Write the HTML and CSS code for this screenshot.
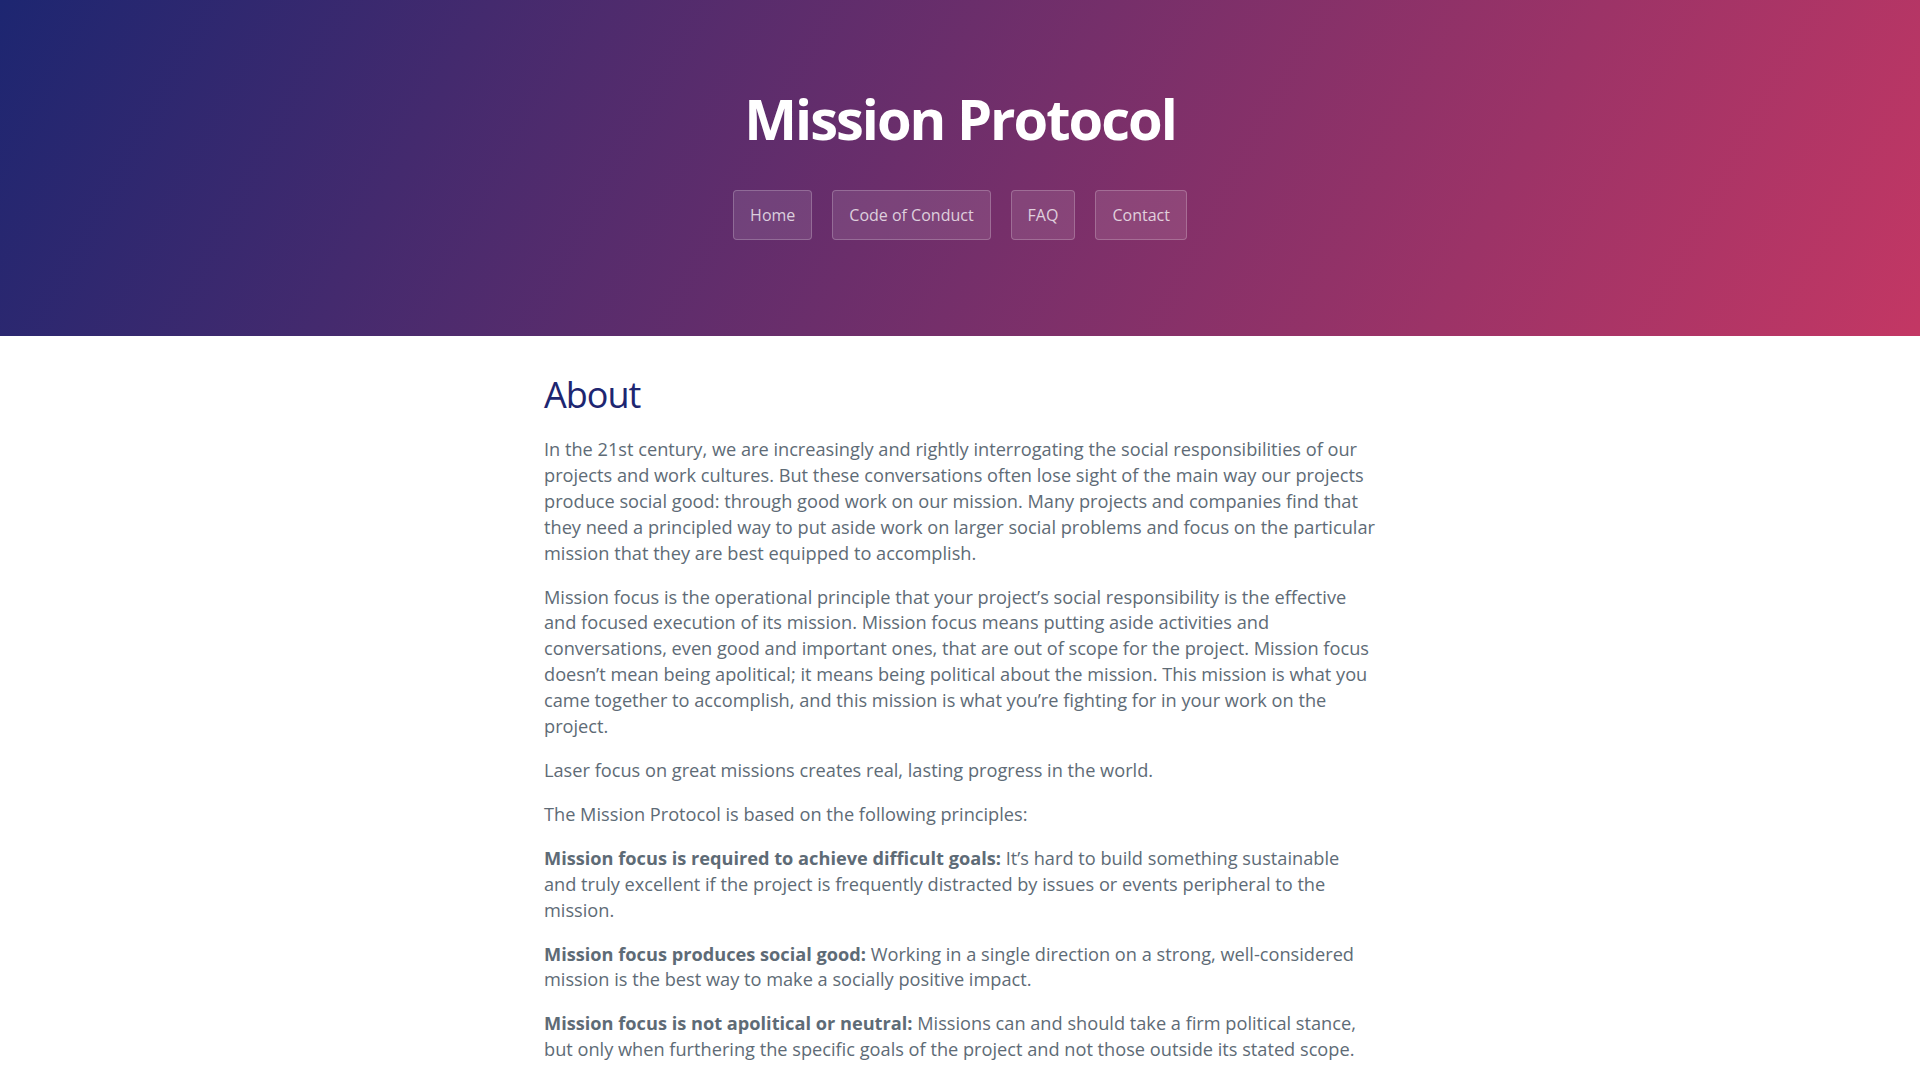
FILE: index.html
```html
<!DOCTYPE html>
<html lang="en">
<head>
<meta charset="utf-8">
<title>Mission Protocol</title>
<link rel="stylesheet" href="styles.css">
</head>
<body>
<header class="hero">
  <h1 class="hero-title">Mission Protocol</h1>
  <nav class="nav">
    <a class="nav-btn" href="#">Home</a>
    <a class="nav-btn" href="#">Code of Conduct</a>
    <a class="nav-btn" href="#">FAQ</a>
    <a class="nav-btn" href="#">Contact</a>
  </nav>
</header>
<main class="content">
  <h2 class="section-title">About</h2>
  <p>In the 21st century, we are increasingly and rightly interrogating the social responsibilities of our projects and work cultures. But these conversations often lose sight of the main way our projects produce social good: through good work on our mission. Many projects and companies find that they need a principled way to put aside work on larger social problems and focus on the particular mission that they are best equipped to accomplish.</p>
  <p>Mission focus is the operational principle that your project’s social responsibility is the effective and focused execution of its mission. Mission focus means putting aside activities and conversations, even good and important ones, that are out of scope for the project. Mission focus doesn’t mean being apolitical; it means being political about the mission. This mission is what you came together to accomplish, and this mission is what you’re fighting for in your work on the project.</p>
  <p>Laser focus on great missions creates real, lasting progress in the world.</p>
  <p>The Mission Protocol is based on the following principles:</p>
  <p><strong>Mission focus is required to achieve difficult goals:</strong> It’s hard to build something sustainable and truly excellent if the project is frequently distracted by issues or events peripheral to the mission.</p>
  <p><strong>Mission focus produces social good:</strong> Working in a single direction on a strong, well-considered mission is the best way to make a socially positive impact.</p>
  <p><strong>Mission focus is not apolitical or neutral:</strong> Missions can and should take a firm political stance, but only when furthering the specific goals of the project and not those outside its stated scope.</p>
  <p><strong>Mission focus is a responsibility:</strong> Projects have a responsibility to their members and users to stay focused on the mission they committed to.</p>
</main>
</body>
</html>
```
FILE: styles.css
```css
* { box-sizing: border-box; }
html, body { margin: 0; padding: 0; }
body {
  font-family: "Open Sans", "Noto Sans", sans-serif;
  background: #ffffff;
  color: #5e6b76;
}
.hero {
  background: linear-gradient(118deg, #1d2671 0%, #c33764 100%);
  padding: 80px 0 96px;
  text-align: center;
}
.hero-title {
  margin: 0 0 34px;
  font-size: 56px;
  font-weight: 700;
  letter-spacing: -2px;
  line-height: normal;
  color: #ffffff;
}
.nav {
  display: flex;
  justify-content: center;
  gap: 20px;
}
.nav-btn {
  display: block;
  padding: 12px 16px;
  font-size: 16px;
  line-height: 24px;
  color: rgba(255, 255, 255, 0.75);
  text-decoration: none;
  background: rgba(255, 255, 255, 0.1);
  border: 1px solid rgba(255, 255, 255, 0.22);
  border-radius: 4px;
}
.content {
  width: 832px;
  margin: 0 auto;
  padding-top: 34px;
}
.section-title {
  margin: 0 0 18px;
  font-size: 36px;
  font-weight: 400;
  letter-spacing: -1px;
  line-height: normal;
  color: #1d2671;
}
.content p {
  margin: 0 0 18px;
  font-size: 18.2px;
  line-height: 25.9px;
}
.content strong {
  font-weight: 700;
}
```
